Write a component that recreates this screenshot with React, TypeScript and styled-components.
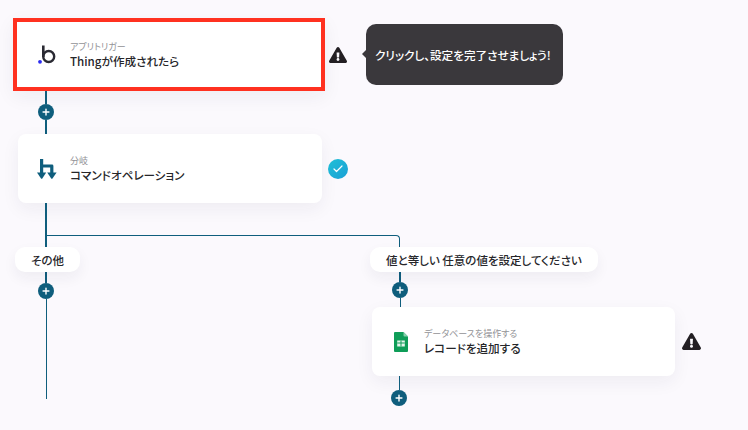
import React from "react";
import styled, { createGlobalStyle } from "styled-components";
import { FaExclamationTriangle } from "react-icons/fa";
import { Plus, Check } from "lucide-react";

const TEAL = "#0f5e7d";

const GlobalStyle = createGlobalStyle`
  html, body {
    margin: 0;
    padding: 0;
    background: #fbf9fd;
    font-family: "Noto Sans CJK JP", "Noto Sans", sans-serif;
  }
`;

const BaseLogo = () => (
  <svg width="18" height="19" viewBox="0 0 18 19">
    <circle cx="10.7" cy="11.5" r="5.5" fill="none" stroke="#2a2a33" strokeWidth="2.4" />
    <rect x="4" y="0.5" width="2.6" height="11.5" fill="#2a2a33" />
    <circle cx="2" cy="16.8" r="1.9" fill="#2b2bf0" />
  </svg>
);

const BranchLogo = () => (
  <svg width="20" height="20" viewBox="0 0 20 20" fill={TEAL}>
    <path d="M3 0h3.2v5.6H15a1.4 1.4 0 0 1 1.4 1.4V15h-3.2V8.6H6.2V15H3z" />
    <path d="M0 13.6h9.2L5.3 19.4a.8.8 0 0 1-1.3 0z" />
    <path d="M10.2 13.6h9.4L15.5 19.4a.8.8 0 0 1-1.3 0z" />
  </svg>
);

const SheetsLogo = () => (
  <svg width="14" height="20" viewBox="0 0 14 20">
    <path d="M1 0h8.5L14 4.5V19a1 1 0 0 1-1 1H1a1 1 0 0 1-1-1V1a1 1 0 0 1 1-1z" fill="#0f9d58" />
    <path d="M9.5 0L14 4.5H10.5a1 1 0 0 1-1-1z" fill="#87ceac" />
    <path d="M3.2 8.5h7.6v6H3.2z" fill="#e6f5ec" />
    <path d="M3.2 11h7.6M7 8.5v6" stroke="#0f9d58" strokeWidth="1" />
  </svg>
);

const PlusButton = () => (
  <PlusDot>
    <Plus size={10} color="#fff" strokeWidth={3.4} />
  </PlusDot>
);

const App = () => {
  return (
    <Page>
      <GlobalStyle />
      <Row $left={13}>
        <Card $active>
          <IconBox>
            <BaseLogo />
          </IconBox>
          <CardText>
            <Label>アプリトリガー</Label>
            <Title>Thingが作成されたら</Title>
          </CardText>
        </Card>
        <Warning>
          <FaExclamationTriangle size={18} />
        </Warning>
        <Tooltip>クリックし、設定を完了させましょう!</Tooltip>
      </Row>

      <Stem $left={38}>
        <StemLine $height={13} />
        <PlusButton />
        <StemLine $height={14} />
      </Stem>

      <Row $left={18}>
        <Card>
          <IconBox>
            <BranchLogo />
          </IconBox>
          <CardText>
            <Label>分岐</Label>
            <Title>コマンドオペレーション</Title>
          </CardText>
        </Card>
        <Done>
          <Check size={12} color="#fff" strokeWidth={2.4} />
        </Done>
      </Row>

      <Branch>
        <BranchConnector />
        <BranchColumn $width={355}>
          <Stem $left={23}>
            <StemLine $height={44} />
          </Stem>
          <Pill>その他</Pill>
          <Stem $left={23}>
            <StemLine $height={11} />
            <PlusButton />
            <StemLine $height={100} $thin />
          </Stem>
        </BranchColumn>
        <BranchColumn>
          <Spacer />
          <Pill>値と等しい 任意の値を設定してください</Pill>
          <Stem $left={22}>
            <StemLine $height={10} />
            <PlusButton />
            <StemLine $height={9} $thin />
          </Stem>
          <SubRow>
            <Card $narrow>
              <IconBox>
                <SheetsLogo />
              </IconBox>
              <CardText>
                <Label>データベースを操作する</Label>
                <Title>レコードを追加する</Title>
              </CardText>
            </Card>
            <Warning $gap={7}>
              <FaExclamationTriangle size={19} />
            </Warning>
          </SubRow>
          <Stem $left={21}>
            <StemLine $height={14} $thin />
            <PlusButton />
          </Stem>
        </BranchColumn>
      </Branch>
    </Page>
  );
};

export default App;

const Page = styled.div`
  width: 748px;
  height: 430px;
  box-sizing: border-box;
  padding-top: 18px;
  overflow: hidden;
  background: #fbf9fd;
`;

const Row = styled.div<{ $left: number }>`
  display: flex;
  align-items: center;
  margin-left: ${(p) => p.$left}px;
`;

const Card = styled.div<{ $active?: boolean; $narrow?: boolean }>`
  display: flex;
  align-items: center;
  box-sizing: border-box;
  width: ${(p) => (p.$active ? 312 : p.$narrow ? 303 : 304)}px;
  height: ${(p) => (p.$active ? 73 : 69)}px;
  padding-left: ${(p) => (p.$active ? 19 : 18)}px;
  background: #fff;
  border: ${(p) => (p.$active ? "4px solid #ff3120" : "none")};
  border-radius: ${(p) => (p.$active ? 0 : 8)}px;
  box-shadow: 0 6px 18px rgba(40, 30, 70, 0.06);
`;

const IconBox = styled.div`
  display: flex;
  align-items: center;
  justify-content: center;
  width: 21px;
  margin-right: 13px;
`;

const CardText = styled.div`
  display: flex;
  flex-direction: column;
  font-feature-settings: "palt";
`;

const Label = styled.div`
  font-size: 9px;
  line-height: 13px;
  color: #929296;
`;

const Title = styled.div`
  font-size: 11.6px;
  line-height: 17px;
  font-weight: 500;
  color: #26262a;
`;

const Warning = styled.div<{ $gap?: number }>`
  display: flex;
  margin-left: ${(p) => p.$gap ?? 4}px;
  color: #231f23;
`;

const Tooltip = styled.div`
  position: relative;
  display: flex;
  align-items: center;
  box-sizing: border-box;
  width: 197px;
  height: 61px;
  margin-left: 19px;
  padding-left: 9px;
  border-radius: 10px;
  background: #3a383c;
  color: #fff;
  font-size: 11.6px;
  font-weight: 500;
  font-feature-settings: "palt";
  white-space: nowrap;

  &::before {
    content: "";
    position: absolute;
    left: -4px;
    top: 26px;
    border-top: 4px solid transparent;
    border-bottom: 4px solid transparent;
    border-right: 4px solid #3a383c;
  }
`;

const Stem = styled.div<{ $left: number }>`
  display: flex;
  flex-direction: column;
  align-items: center;
  width: 16px;
  margin-left: ${(p) => p.$left}px;
`;

const StemLine = styled.div<{ $height: number; $thin?: boolean }>`
  width: ${(p) => (p.$thin ? 1 : 2.5)}px;
  height: ${(p) => p.$height}px;
  background: ${TEAL};
`;

const PlusDot = styled.div`
  display: flex;
  align-items: center;
  justify-content: center;
  width: 16px;
  height: 16px;
  border-radius: 50%;
  background: ${TEAL};
`;

const Done = styled.div`
  display: flex;
  align-items: center;
  justify-content: center;
  width: 20px;
  height: 20px;
  margin-left: 6px;
  border-radius: 50%;
  background: linear-gradient(135deg, #1fc0d6, #1a9fd6);
`;

const Branch = styled.div`
  position: relative;
  display: flex;
  padding-left: 15px;
`;

const BranchConnector = styled.div`
  position: absolute;
  left: 46px;
  top: 32px;
  width: 354px;
  height: 14px;
  box-sizing: border-box;
  border-top: 1.5px solid ${TEAL};
  border-right: 1.5px solid ${TEAL};
  border-top-right-radius: 4px;
`;

const BranchColumn = styled.div<{ $width?: number }>`
  position: relative;
  display: flex;
  flex-direction: column;
  align-items: flex-start;
  ${(p) => (p.$width ? `width: ${p.$width}px;` : "")}
`;

const Spacer = styled.div`
  height: 44px;
`;

const Pill = styled.div`
  position: relative;
  display: flex;
  align-items: center;
  height: 25px;
  padding: 0 16px;
  border-radius: 10px;
  background: #fff;
  box-shadow: 0 6px 14px rgba(40, 30, 70, 0.06);
  color: #26262a;
  font-size: 11.5px;
  font-weight: 500;
  font-feature-settings: "palt";
  white-space: nowrap;
`;

const SubRow = styled.div`
  display: flex;
  align-items: center;
  margin-left: 2px;
`;
